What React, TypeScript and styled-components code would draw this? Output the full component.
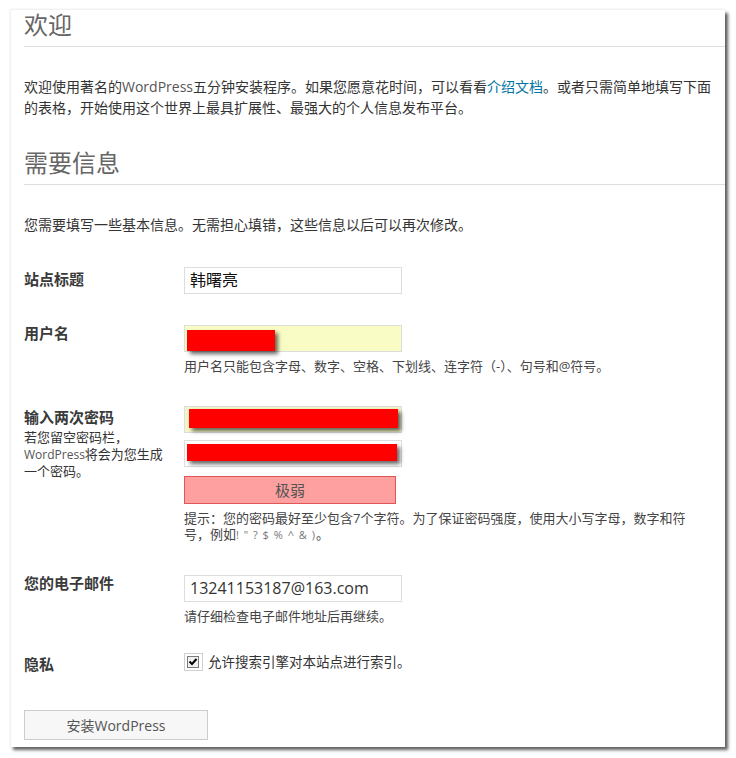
import React from "react";
import styled, { createGlobalStyle } from "styled-components";

const GlobalStyle = createGlobalStyle`
  html, body { margin: 0; padding: 0; background: #ffffff; }
  body {
    font-family: "Open Sans", "Noto Sans CJK SC", sans-serif;
    color: #333333;
  }
  #root { padding: 10px 0 12px 10px; }
`;

const Panel = styled.div`
  box-sizing: border-box;
  width: 715px;
  height: 737px;
  background: #ffffff;
  padding: 0 0 0 13px;
  border-left: 1px solid #f0f0f0;
  box-shadow: 0 -1px 2px rgba(0, 0, 0, 0.08), 3px 3px 3px rgba(0, 0, 0, 0.62);
`;

const Heading = styled.h1<{ $top: number }>`
  margin: ${(p) => p.$top}px 0 0 0;
  padding: 0 0 6px 0;
  font-size: 24px;
  line-height: 30px;
  font-weight: 400;
  color: #666666;
  border-bottom: 1px solid #dedede;
`;

const Para = styled.p`
  margin: 29px 0 0 0;
  padding-right: 10px;
  font-size: 14px;
  line-height: 21px;
  color: #333333;
`;

const Latin = styled.span<{ $color?: string; $size?: number }>`
  font-family: "Open Sans", sans-serif;
  color: ${(p) => p.$color || "inherit"};
  font-size: ${(p) => (p.$size ? `${p.$size}px` : "inherit")};
`;

const Link = styled.a`
  color: #0074a2;
  text-decoration: none;
`;

const Row = styled.div<{ $top: number }>`
  display: grid;
  grid-template-columns: 160px 1fr;
  margin-top: ${(p) => p.$top}px;
`;

const LabelCol = styled.div``;

const Label = styled.div<{ $offset: number }>`
  padding-top: ${(p) => p.$offset}px;
  font-size: 15px;
  line-height: 16px;
  font-weight: 700;
  color: #3a3a3a;
`;

const SubNote = styled.div`
  margin-top: 4px;
  max-width: 140px;
  font-size: 13px;
  line-height: 17px;
  color: #333333;
`;

const FieldCol = styled.div`
  display: flex;
  flex-direction: column;
  align-items: flex-start;
`;

const FieldBox = styled.div<{ $bg?: string; $gap?: number; $padTop?: number }>`
  box-sizing: border-box;
  width: 218px;
  height: 27px;
  margin-top: ${(p) => p.$gap || 0}px;
  border: 1px solid #dddddd;
  background: ${(p) => p.$bg || "#ffffff"};
  display: flex;
  align-items: flex-start;
  padding: ${(p) => p.$padTop ?? 0}px 0 0 5px;
  font-size: 16px;
  line-height: 25px;
  color: #111111;
`;

const Redaction = styled.div<{ $w: number; $h: number; $ml: number }>`
  width: ${(p) => p.$w}px;
  height: ${(p) => p.$h}px;
  margin-left: ${(p) => p.$ml}px;
  background: #ff0000;
  box-shadow: 3px 3px 4px rgba(0, 0, 0, 0.6);
`;

const Strength = styled.div`
  box-sizing: border-box;
  margin-top: 9px;
  width: 212px;
  height: 28px;
  background: #ffa0a0;
  border: 1px solid #e35656;
  text-align: center;
  font-size: 15px;
  line-height: 26px;
  color: #555555;
`;

const Hint = styled.div<{ $top: number; $lh: number }>`
  margin-top: ${(p) => p.$top}px;
  max-width: 505px;
  font-size: 13px;
  line-height: ${(p) => p.$lh}px;
  color: #444444;
`;

const Symbols = styled.span`
  font-family: "Open Sans", sans-serif;
  font-size: 11px;
  color: #777777;
  letter-spacing: 1px;
`;

const CheckRow = styled.div`
  display: flex;
  align-items: center;
  gap: 5px;
  font-size: 13.5px;
  line-height: 18px;
  color: #333333;
`;

const Button = styled.button`
  box-sizing: border-box;
  display: block;
  margin-top: 38px;
  width: 184px;
  height: 30px;
  padding: 0;
  background: #f7f7f7;
  border: 1px solid #cccccc;
  font-family: "Open Sans", "Noto Sans CJK SC", sans-serif;
  font-size: 14px;
  line-height: 30px;
  color: #555555;
`;

const CheckIcon = () => (
  <svg width="19" height="18" viewBox="0 0 19 18">
    <rect x="0.5" y="0.5" width="18" height="17" fill="#ffffff" stroke="#d0d0d0" />
    <rect x="3.5" y="3.5" width="11" height="11" fill="#f0f0f0" stroke="#7a7a7a" />
    <polyline points="5.5,8.5 8,11 12.5,6" fill="none" stroke="#000000" strokeWidth="2" />
  </svg>
);

export default function App() {
  return (
    <>
      <GlobalStyle />
      <Panel>
        <Heading $top={0}>欢迎</Heading>
        <Para>
          欢迎使用著名的<Latin $color="#555">WordPress</Latin>五分钟安装程序。如果您愿意花时间，可以看看
          <Link href="#">介绍文档</Link>。或者只需简单地填写下面的表格，开始使用这个世界上最具扩展性、最强大的个人信息发布平台。
        </Para>
        <Heading $top={30}>需要信息</Heading>
        <Para>您需要填写一些基本信息。无需担心填错，这些信息以后可以再次修改。</Para>

        <Row $top={32}>
          <LabelCol>
            <Label $offset={4}>站点标题</Label>
          </LabelCol>
          <FieldCol>
            <FieldBox>韩曙亮</FieldBox>
          </FieldCol>
        </Row>

        <Row $top={31}>
          <LabelCol>
            <Label $offset={0}>用户名</Label>
          </LabelCol>
          <FieldCol>
            <FieldBox $bg="#fafcc6" $padTop={4}>
              <Redaction $w={88} $h={21} $ml={-3} />
            </FieldBox>
            <Hint $top={5} $lh={18}>
              用户名只能包含字母、数字、空格、下划线、连字符（-）、句号和@符号。
            </Hint>
          </FieldCol>
        </Row>

        <Row $top={31}>
          <LabelCol>
            <Label $offset={3}>输入两次密码</Label>
            <SubNote>
              若您留空密码栏，<Latin $color="#555" $size={12}>WordPress</Latin>将会为您生成一个密码。
            </SubNote>
          </LabelCol>
          <FieldCol>
            <FieldBox $bg="#f4f6c8" $padTop={2}>
              <Redaction $w={209} $h={19} $ml={-1} />
            </FieldBox>
            <FieldBox $gap={7} $padTop={3}>
              <Redaction $w={210} $h={17} $ml={-3} />
            </FieldBox>
            <Strength>极弱</Strength>
            <Hint $top={6} $lh={16}>
              提示：您的密码最好至少包含7个字符。为了保证密码强度，使用大小写字母，数字和符号，例如
              <Symbols>! " ? $ % ^ &amp; )</Symbols>。
            </Hint>
          </FieldCol>
        </Row>

        <Row $top={32}>
          <LabelCol>
            <Label $offset={0}>您的电子邮件</Label>
          </LabelCol>
          <FieldCol>
            <FieldBox>
              <Latin $color="#333">13241153187@163.com</Latin>
            </FieldBox>
            <Hint $top={5} $lh={18}>
              请仔细检查电子邮件地址后再继续。
            </Hint>
          </FieldCol>
        </Row>

        <Row $top={28}>
          <LabelCol>
            <Label $offset={3}>隐私</Label>
          </LabelCol>
          <FieldCol>
            <CheckRow>
              <CheckIcon />
              允许搜索引擎对本站点进行索引。
            </CheckRow>
          </FieldCol>
        </Row>

        <Button type="button">安装WordPress</Button>
      </Panel>
    </>
  );
}
